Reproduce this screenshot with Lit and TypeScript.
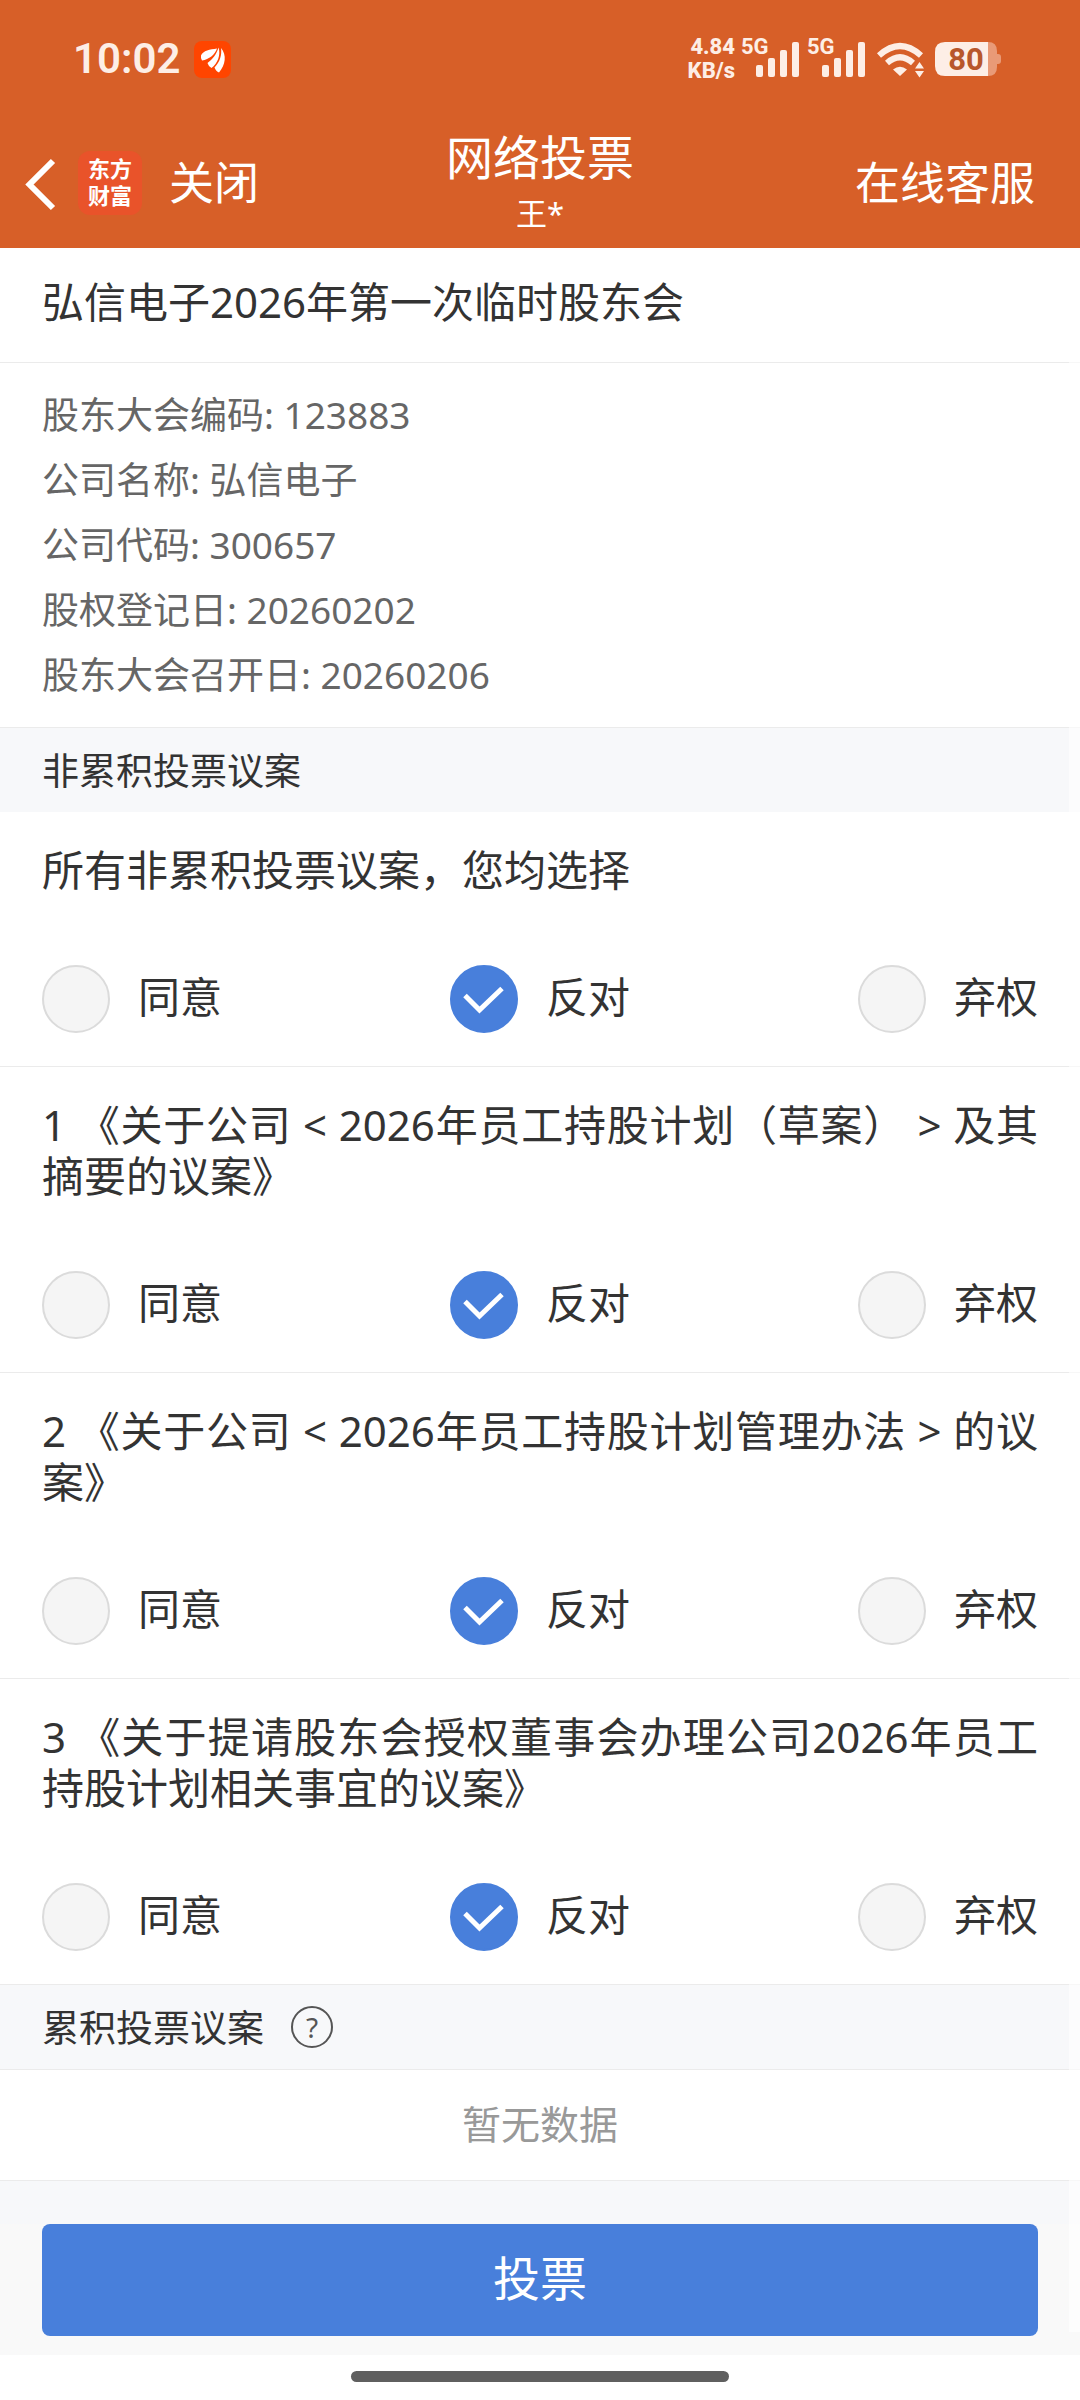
import { LitElement, html, css } from "lit";
import { customElement, property, state } from "lit/decorators.js";

const OPTIONS = ["同意", "反对", "弃权"];

const INFO = [
  ["股东大会编码", "123883"],
  ["公司名称", "弘信电子"],
  ["公司代码", "300657"],
  ["股权登记日", "20260202"],
  ["股东大会召开日", "20260206"],
];

const PROPOSALS = [
  "所有非累积投票议案，您均选择",
  "1 《关于公司 < 2026年员工持股计划（草案） > 及其摘要的议案》",
  "2 《关于公司 < 2026年员工持股计划管理办法 > 的议案》",
  "3 《关于提请股东会授权董事会办理公司2026年员工持股计划相关事宜的议案》",
];

@customElement("status-bar")
class StatusBar extends LitElement {
  static styles = css`
    :host {
      display: flex;
      align-items: center;
      justify-content: space-between;
      height: 118px;
      padding: 0 78px 0 73px;
      color: #fdeee6;
      font-family: Roboto, "Liberation Sans", sans-serif;
    }
    svg {
      display: block;
    }
    .side {
      display: flex;
      align-items: center;
      gap: 6px;
    }
    .left {
      gap: 14px;
    }
    .time {
      font-size: 42px;
      font-weight: 600;
      line-height: 48px;
    }
    .speed {
      font-size: 22px;
      font-weight: 800;
      line-height: 24px;
      text-align: right;
    }
    .small {
      font-size: 22px;
      font-weight: 700;
    }
    .level {
      font-size: 31px;
      font-weight: 700;
    }
  `;

  private signal() {
    return html`<svg width="60" height="56" viewBox="0 -8 60 56" fill="currentColor" role="img" aria-label="5G">
      <text class="small" x="0" y="15">5G</text>
      <rect x="15" y="26" width="7" height="12" rx="2" />
      <rect x="27" y="19" width="7" height="19" rx="2" />
      <rect x="39" y="11" width="7" height="27" rx="2" />
      <rect x="51" y="3" width="7" height="35" rx="2" />
    </svg>`;
  }

  render() {
    return html`
      <div class="side left">
        <span class="time">10:02</span>
        <svg width="37" height="37" viewBox="0 0 37 37" aria-hidden="true">
          <rect width="37" height="37" rx="8" fill="#ff4500" />
          <g fill="#fff">
            <path d="M7 14.500C9 9.500 16 8.500 23 7.500C21 13.500 15 18.500 8 19.500Q6.500 17 7 14.500Z" />
            <path d="M24.500 6.500C27 14 23.500 22.500 17.500 27Q14.500 25.500 13.500 22C18.500 18 22.500 13.500 24.500 6.500Z" />
            <path d="M27 7C33 14 31.500 24 25 31.500Q22 30.500 20.500 26.500C26 21 28 14 27 7Z" />
          </g>
        </svg>
      </div>
      <div class="side">
        <div class="speed">4.84<br />KB/s</div>
        ${this.signal()} ${this.signal()}
        <svg width="56" height="40" viewBox="0 0 56 40" aria-hidden="true">
          <g fill="none" stroke="currentColor" stroke-width="6">
            <path d="M6 16.500Q27 -2.500 48 16.500" />
            <path d="M14 24Q27 12.500 40 24" />
          </g>
          <path d="M20 30.500Q27 25 34 30.500L27 37Z" fill="currentColor" />
          <path d="M42 29.500L46.500 23L51 29.500ZM42 32L46.500 38.500L51 32Z" fill="currentColor" />
        </svg>
        <svg width="67" height="40" viewBox="0 0 67 40" role="img" aria-label="80%">
          <path d="M53 3H51V37H53Q62 37 62 28V25H63Q66 25 66 22V18Q66 15 63 15H62V12Q62 3 53 3Z" fill="#e99a77" />
          <path d="M10 3H53V37H10Q0 37 0 27V13Q0 3 10 3Z" fill="currentColor" />
          <text class="level" x="31" y="31" text-anchor="middle" fill="#b8572b">80</text>
        </svg>
      </div>
    `;
  }
}

@customElement("vote-item")
class VoteItem extends LitElement {
  @property() heading = "";
  @property() name = "";
  @state() choice = "反对";

  static styles = css`
    :host {
      display: block;
    }
    .item {
      padding: 32px 42px 33px;
      border-bottom: 1px solid #ebebeb;
    }
    .heading {
      margin: 0 0 70px;
      font-size: 42px;
      font-weight: 400;
      line-height: 51px;
      text-align: justify;
      text-spacing-trim: space-all;
    }
    .options {
      display: flex;
      justify-content: space-between;
    }
    .option {
      display: flex;
      align-items: center;
      gap: 28px;
      font-size: 42px;
      line-height: 64px;
    }
    .mark {
      display: grid;
      width: 68px;
      height: 68px;
    }
    .radio,
    .tick {
      grid-area: 1 / 1;
      width: 100%;
      height: 100%;
    }
    .radio {
      appearance: none;
      box-sizing: border-box;
      margin: 0;
      border: 2px solid #dbdbdb;
      border-radius: 50%;
      background: #f5f5f5;
    }
    .radio:checked {
      border-color: #487fdb;
      background: #487fdb;
    }
    .tick {
      visibility: hidden;
      pointer-events: none;
    }
    .radio:checked + .tick {
      visibility: visible;
    }
    .label {
      padding-bottom: 4px;
    }
  `;

  render() {
    return html`
      <div class="item" role="radiogroup" aria-labelledby="heading">
        <h3 class="heading" id="heading">${this.heading}</h3>
        <div class="options">
          ${OPTIONS.map(
            (option) => html`<label class="option">
              <span class="mark">
                <input
                  class="radio"
                  type="radio"
                  name=${this.name}
                  .checked=${this.choice === option}
                  @change=${() => (this.choice = option)}
                />
                <svg class="tick" viewBox="0 0 68 68" fill="none" stroke="#fff" stroke-width="5" aria-hidden="true">
                  <path d="M15 30.500L29.500 45L52 23.500" />
                </svg>
              </span>
              <span class="label">${option}</span>
            </label>`
          )}
        </div>
      </div>
    `;
  }
}

@customElement("app-root")
class AppRoot extends LitElement {
  static styles = css`
    :host {
      display: block;
      min-height: 100vh;
      background: #fff;
      color: #333;
      font-family: "Noto Sans", "Noto Sans CJK SC", sans-serif;
    }
    svg {
      display: block;
    }
    .top {
      background: #d75f28;
      color: #fff;
    }
    .nav {
      display: grid;
      grid-template-columns: 1fr auto 1fr;
      align-items: center;
      height: 130px;
    }
    .nav-left {
      display: flex;
      align-items: center;
      padding-left: 24px;
    }
    .plain {
      padding: 0;
      border: 0;
      background: none;
      color: inherit;
      font: inherit;
    }
    .action {
      color: inherit;
      font-size: 45px;
      line-height: 60px;
      text-decoration: none;
    }
    .logo {
      display: grid;
      place-content: center;
      width: 64px;
      height: 64px;
      margin: 0 27px 0 22px;
      border-radius: 12px;
      background: #e9532a;
      font-family: "Liberation Sans", "Noto Sans CJK SC", sans-serif;
      font-size: 22px;
      font-weight: 700;
      line-height: 27px;
    }
    .nav-title {
      text-align: center;
    }
    .page-name {
      margin: 0;
      font-size: 47px;
      font-weight: 400;
      line-height: 60px;
    }
    .user {
      margin: 0;
      font-size: 31px;
      line-height: 52px;
    }
    .nav-right {
      justify-self: end;
      padding-right: 45px;
    }
    .page {
      position: relative;
    }
    .meeting {
      margin: 0;
      padding: 28px 42px 35px;
      border-bottom: 1px solid #ebebeb;
      font-size: 42px;
      font-weight: 400;
      line-height: 51px;
    }
    .info {
      margin: 0;
      padding: 19px 42px 20px;
      border-bottom: 1px solid #ebebeb;
      color: #666;
      font-size: 37px;
      line-height: 65px;
    }
    .info-value,
    .info-key {
      display: inline;
      margin: 0;
    }
    .section {
      display: flex;
      align-items: center;
      gap: 27px;
      height: 84px;
      padding: 0 42px;
      background: #f7f8fa;
    }
    .section-name {
      margin: 0;
      font-size: 37px;
      font-weight: 400;
      line-height: 51px;
    }
    .help {
      box-sizing: border-box;
      width: 42px;
      height: 42px;
      padding: 0;
      border: 2px solid #555;
      border-radius: 50%;
      background: none;
      color: #555;
      font: 28px/38px "Noto Sans", sans-serif;
    }
    .empty {
      margin: 0;
      padding: 22px 42px 24px;
      border: solid #ebebeb;
      border-width: 1px 0;
      color: #999;
      font-size: 39px;
      line-height: 64px;
      text-align: center;
    }
    .spacer {
      height: 43px;
      background: #f7f8fa;
    }
    .footer {
      padding: 0 42px 19px;
      background: #f9f9f9;
    }
    .submit {
      display: block;
      width: 100%;
      height: 112px;
      padding: 0 0 4px;
      border: 0;
      border-radius: 8px;
      background: #487fdb;
      color: #fff;
      font: 47px/64px "Noto Sans", "Noto Sans CJK SC", sans-serif;
    }
    .track {
      position: absolute;
      inset: 0 0 23px auto;
      width: 11px;
      background: rgba(255, 255, 255, 0.6);
      pointer-events: none;
    }
    .home {
      display: flex;
      justify-content: center;
      padding: 16px 0 18px;
    }
    .home-bar {
      width: 35%;
      height: 11px;
      border-radius: 6px;
      background: #5f5f5f;
    }
  `;

  render() {
    return html`
      <header class="top">
        <status-bar></status-bar>
        <nav class="nav">
          <div class="nav-left">
            <button class="plain" type="button" aria-label="返回">
              <svg width="32" height="56" viewBox="0 0 32 56" fill="none" stroke="#fff" stroke-width="6">
                <path d="M29 6L5.500 29.500L29 53" />
              </svg>
            </button>
            <span class="logo"><span>东方</span><span>财富</span></span>
            <a class="action" href="#close">关闭</a>
          </div>
          <div class="nav-title">
            <h1 class="page-name">网络投票</h1>
            <p class="user">王*</p>
          </div>
          <div class="nav-right"><a class="action" href="#service">在线客服</a></div>
        </nav>
      </header>
      <main class="page">
        <h2 class="meeting">弘信电子2026年第一次临时股东会</h2>
        <dl class="info">
          ${INFO.map(
            ([key, value]) => html`<div><dt class="info-key">${key}:</dt> <dd class="info-value">${value}</dd></div>`
          )}
        </dl>
        <div class="section"><h2 class="section-name">非累积投票议案</h2></div>
        ${PROPOSALS.map((text, i) => html`<vote-item .heading=${text} .name=${"vote" + i}></vote-item>`)}
        <div class="section">
          <h2 class="section-name">累积投票议案</h2>
          <button class="help" type="button" aria-label="说明">?</button>
        </div>
        <p class="empty">暂无数据</p>
        <div class="spacer"></div>
        <div class="footer"><button class="submit" type="button">投票</button></div>
        <div class="track"></div>
      </main>
      <div class="home"><div class="home-bar"></div></div>
    `;
  }
}
